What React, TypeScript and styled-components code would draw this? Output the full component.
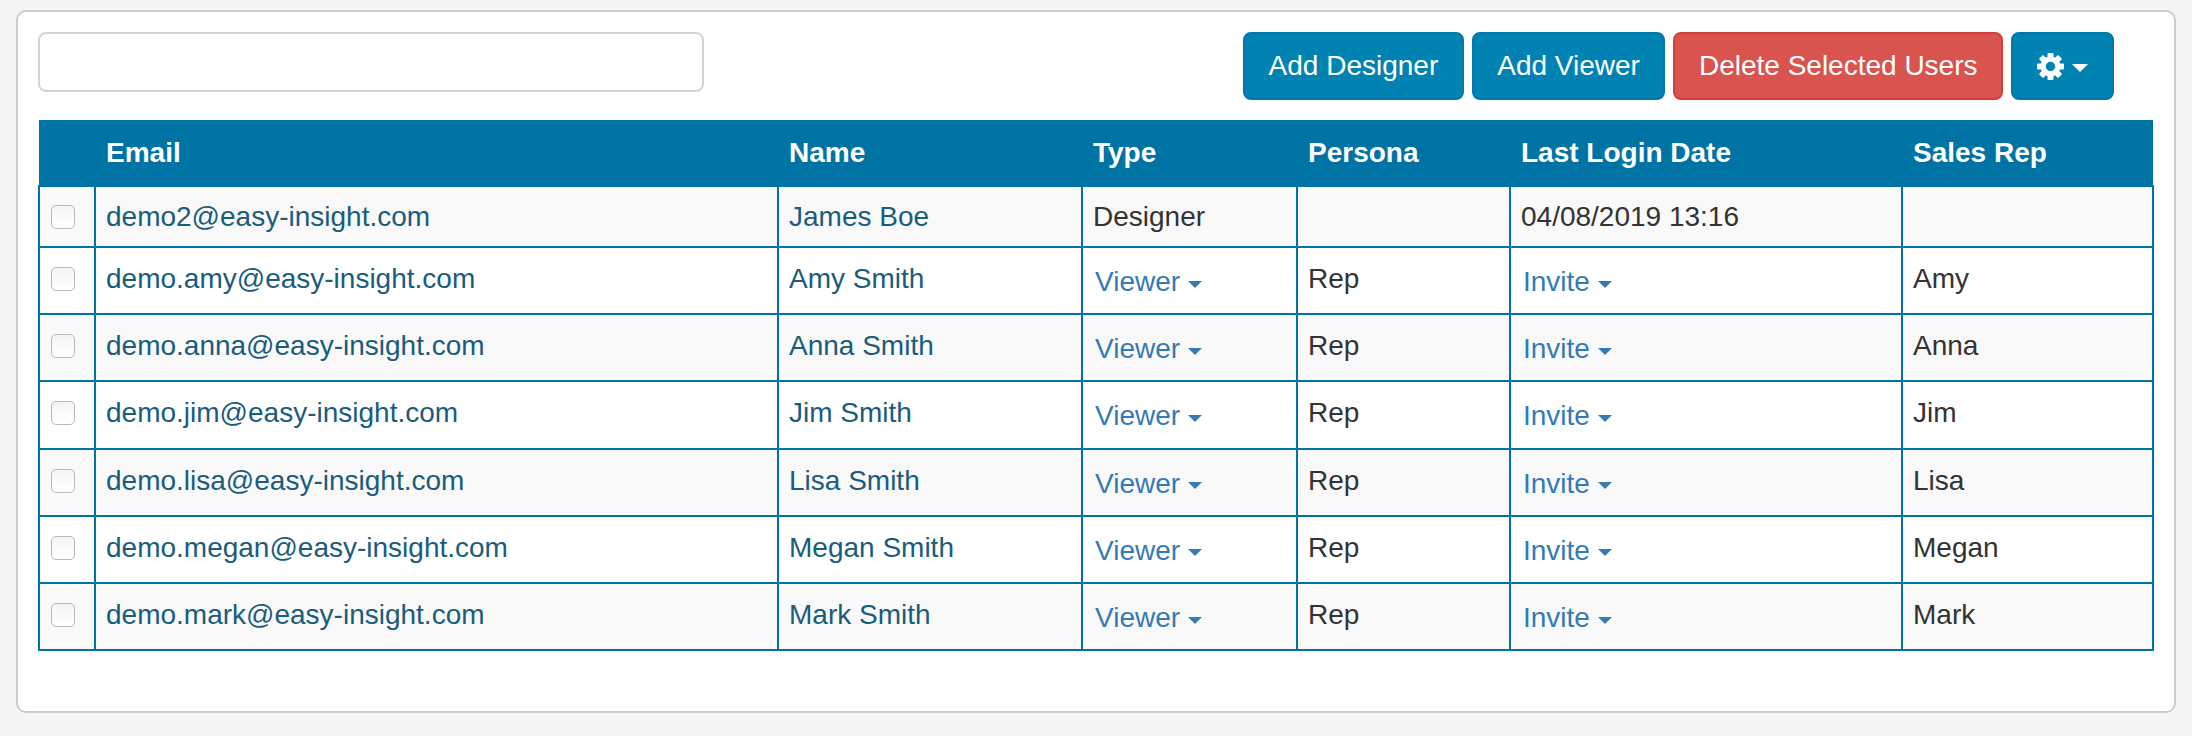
import styled, { createGlobalStyle } from 'styled-components';

const GlobalStyle = createGlobalStyle`
  html, body {
    margin: 0;
    background-color: #f5f5f5;
    font-family: "Liberation Sans", Arial, sans-serif;
    color: #333333;
  }
  * {
    box-sizing: border-box;
  }
`;

const Page = styled.div`
  padding: 10px 16px 23px;
`;

const Panel = styled.div`
  height: 703px;
  padding: 20px;
  background-color: #ffffff;
  border: 2px solid #cccccc;
  border-radius: 10px;
`;

const Toolbar = styled.div`
  display: flex;
  justify-content: space-between;
  align-items: flex-start;
  padding-right: 40px;
  margin-bottom: 20px;
`;

const SearchInput = styled.input`
  width: 666px;
  height: 60px;
  border: 2px solid #d3d3d3;
  border-radius: 8px;
  background-color: #ffffff;
  outline: none;
`;

const ButtonGroup = styled.div`
  display: flex;
  gap: 8px;
`;

const Button = styled.button<{ $danger?: boolean }>`
  display: inline-flex;
  align-items: center;
  height: 68px;
  padding: 0 23.5px;
  font-family: inherit;
  font-size: 28px;
  color: #ffffff;
  background-color: ${({ $danger }) => ($danger ? '#d9534f' : '#0083b3')};
  border: 2px solid ${({ $danger }) => ($danger ? '#d43f3a' : '#0079a8')};
  border-radius: 8px;
  cursor: pointer;
`;

const Caret = styled.span<{ $size: number }>`
  display: inline-block;
  width: 0;
  height: 0;
  border-top: ${({ $size }) => $size}px solid currentColor;
  border-left: ${({ $size }) => $size}px solid transparent;
  border-right: ${({ $size }) => $size}px solid transparent;
`;

const GearButton = styled(Button)`
  gap: 8px;
  padding: 0 24px;

  ${Caret} {
    margin-top: 4px;
  }
`;

const Table = styled.table`
  width: 2116px;
  table-layout: fixed;
  border-collapse: collapse;
  font-size: 28px;
`;

const HeadRow = styled.tr`
  height: 66px;
  background-color: #0073a5;
`;

const HeadCell = styled.th`
  padding: 0 10px 0 11px;
  text-align: left;
  font-weight: bold;
  color: #ffffff;
`;

const Row = styled.tr<{ $first?: boolean; $striped?: boolean }>`
  height: ${({ $first }) => ($first ? '61px' : '67.2px')};
  background-color: ${({ $striped }) => ($striped ? '#f9f9f9' : '#ffffff')};

  td {
    padding-bottom: ${({ $first }) => ($first ? '0' : '3px')};
  }
`;

const Cell = styled.td`
  padding: 0 10px;
  border: 2px solid #0073a5;
  vertical-align: middle;
`;

const UserCell = styled(Cell)`
  color: #1a5c7c;
`;

const CheckCell = styled(Cell)`
  padding: 0 0 0 11px;
`;

const Checkbox = styled.input`
  appearance: none;
  display: block;
  width: 24px;
  height: 24px;
  margin: 0;
  border: 1px solid #b9b9b9;
  border-radius: 5px;
  background-image: linear-gradient(#f4f4f4, #ffffff);
`;

const Dropdown = styled.span`
  display: inline-flex;
  align-items: center;
  gap: 8px;
  padding: 6px 0 0 2px;
  color: #337ab7;

  ${Caret} {
    margin-top: 4px;
  }
`;

function GearIcon() {
  return (
    <svg width="27" height="27" viewBox="0 0 27 27" fill="none">
      {[0, 45, 90, 135].map((angle) => (
        <rect key={angle} x="10.5" y="0" width="6" height="27" rx="1" fill="currentColor" transform={`rotate(${angle} 13.5 13.5)`} />
      ))}
      <circle cx="13.5" cy="13.5" r="7.2" stroke="currentColor" strokeWidth="5.4" />
      <circle cx="13.5" cy="13.5" r="4.7" fill="#0083b3" />
    </svg>
  );
}

const columns = [56, 683, 304, 215, 213, 392, 251];

const users = [
  { email: 'demo2@easy-insight.com', name: 'James Boe', designer: true, login: '04/08/2019 13:16', persona: '', rep: '' },
  { email: 'demo.amy@easy-insight.com', name: 'Amy Smith', persona: 'Rep', rep: 'Amy' },
  { email: 'demo.anna@easy-insight.com', name: 'Anna Smith', persona: 'Rep', rep: 'Anna' },
  { email: 'demo.jim@easy-insight.com', name: 'Jim Smith', persona: 'Rep', rep: 'Jim' },
  { email: 'demo.lisa@easy-insight.com', name: 'Lisa Smith', persona: 'Rep', rep: 'Lisa' },
  { email: 'demo.megan@easy-insight.com', name: 'Megan Smith', persona: 'Rep', rep: 'Megan' },
  { email: 'demo.mark@easy-insight.com', name: 'Mark Smith', persona: 'Rep', rep: 'Mark' },
];

export default function App() {
  return (
    <Page>
      <GlobalStyle />
      <Panel>
        <Toolbar>
          <SearchInput type="text" />
          <ButtonGroup>
            <Button>Add Designer</Button>
            <Button>Add Viewer</Button>
            <Button $danger>Delete Selected Users</Button>
            <GearButton>
              <GearIcon />
              <Caret $size={8} />
            </GearButton>
          </ButtonGroup>
        </Toolbar>
        <Table>
          <colgroup>
            {columns.map((width, i) => (
              <col key={i} width={width} />
            ))}
          </colgroup>
          <thead>
            <HeadRow>
              <HeadCell />
              <HeadCell>Email</HeadCell>
              <HeadCell>Name</HeadCell>
              <HeadCell>Type</HeadCell>
              <HeadCell>Persona</HeadCell>
              <HeadCell>Last Login Date</HeadCell>
              <HeadCell>Sales Rep</HeadCell>
            </HeadRow>
          </thead>
          <tbody>
            {users.map((user, i) => (
              <Row key={user.email} $first={i === 0} $striped={i % 2 === 0}>
                <CheckCell>
                  <Checkbox type="checkbox" />
                </CheckCell>
                <UserCell>{user.email}</UserCell>
                <UserCell>{user.name}</UserCell>
                <Cell>
                  {user.designer ? (
                    'Designer'
                  ) : (
                    <Dropdown>
                      Viewer <Caret $size={7.5} />
                    </Dropdown>
                  )}
                </Cell>
                <Cell>{user.persona}</Cell>
                <Cell>
                  {user.login ?? (
                    <Dropdown>
                      Invite <Caret $size={7.5} />
                    </Dropdown>
                  )}
                </Cell>
                <Cell>{user.rep}</Cell>
              </Row>
            ))}
          </tbody>
        </Table>
      </Panel>
    </Page>
  );
}
